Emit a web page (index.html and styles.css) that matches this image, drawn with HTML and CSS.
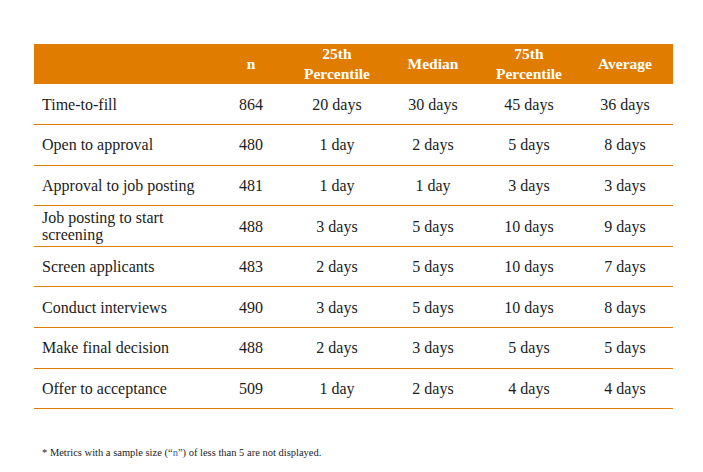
FILE: index.html
```html
<!DOCTYPE html>
<html>
<head>
<meta charset="utf-8">
<link rel="stylesheet" href="styles.css">
</head>
<body>
<div class="page">
  <table class="metrics">
    <colgroup>
      <col class="c-label"><col class="c-n"><col class="c-v"><col class="c-v"><col class="c-v"><col class="c-v">
    </colgroup>
    <thead>
      <tr>
        <th></th>
        <th>n</th>
        <th>25th<br>Percentile</th>
        <th>Median</th>
        <th>75th<br>Percentile</th>
        <th>Average</th>
      </tr>
    </thead>
    <tbody>
      <tr><td class="label">Time-to-fill</td><td>864</td><td>20 days</td><td>30 days</td><td>45 days</td><td>36 days</td></tr>
      <tr><td class="label">Open to approval</td><td>480</td><td>1 day</td><td>2 days</td><td>5 days</td><td>8 days</td></tr>
      <tr><td class="label">Approval to job posting</td><td>481</td><td>1 day</td><td>1 day</td><td>3 days</td><td>3 days</td></tr>
      <tr><td class="label">Job posting to start screening</td><td>488</td><td>3 days</td><td>5 days</td><td>10 days</td><td>9 days</td></tr>
      <tr><td class="label">Screen applicants</td><td>483</td><td>2 days</td><td>5 days</td><td>10 days</td><td>7 days</td></tr>
      <tr><td class="label">Conduct interviews</td><td>490</td><td>3 days</td><td>5 days</td><td>10 days</td><td>8 days</td></tr>
      <tr><td class="label">Make final decision</td><td>488</td><td>2 days</td><td>3 days</td><td>5 days</td><td>5 days</td></tr>
      <tr><td class="label">Offer to acceptance</td><td>509</td><td>1 day</td><td>2 days</td><td>4 days</td><td>4 days</td></tr>
    </tbody>
  </table>
  <p class="note">* Metrics with a sample size (“<span class="n">n</span>”) of less than 5 are not displayed.</p>
</div>
</body>
</html>
```
FILE: styles.css
```css
html, body {
  margin: 0;
  padding: 0;
  background: #ffffff;
}
body {
  font-family: "Liberation Serif", "DejaVu Serif", serif;
  color: #1c1c1c;
}
.page {
  padding: 44px 30px 0 34px;
}
.metrics {
  width: 639px;
  border-collapse: collapse;
  table-layout: fixed;
}
.c-label { width: 179px; }
.c-n { width: 76px; }
.c-v { width: 96px; }
.metrics th {
  background: #e07c00;
  color: #ffffff;
  font-weight: bold;
  font-size: 15.5px;
  line-height: 20px;
  height: 40px;
  padding: 0 4px;
  text-align: center;
  vertical-align: middle;
}
.metrics td {
  font-size: 16px;
  line-height: 17px;
  height: 40.6px;
  padding: 0 4px;
  text-align: center;
  vertical-align: middle;
  border-bottom: 1px solid #e07c00;
  box-sizing: border-box;
}
.metrics td.label {
  text-align: left;
  padding-left: 8px;
}
.note {
  margin: 38px 0 0 8px;
  font-size: 10.5px;
  color: #1c1c1c;
}
.note .n {
  color: #1f5fa8;
}
```
